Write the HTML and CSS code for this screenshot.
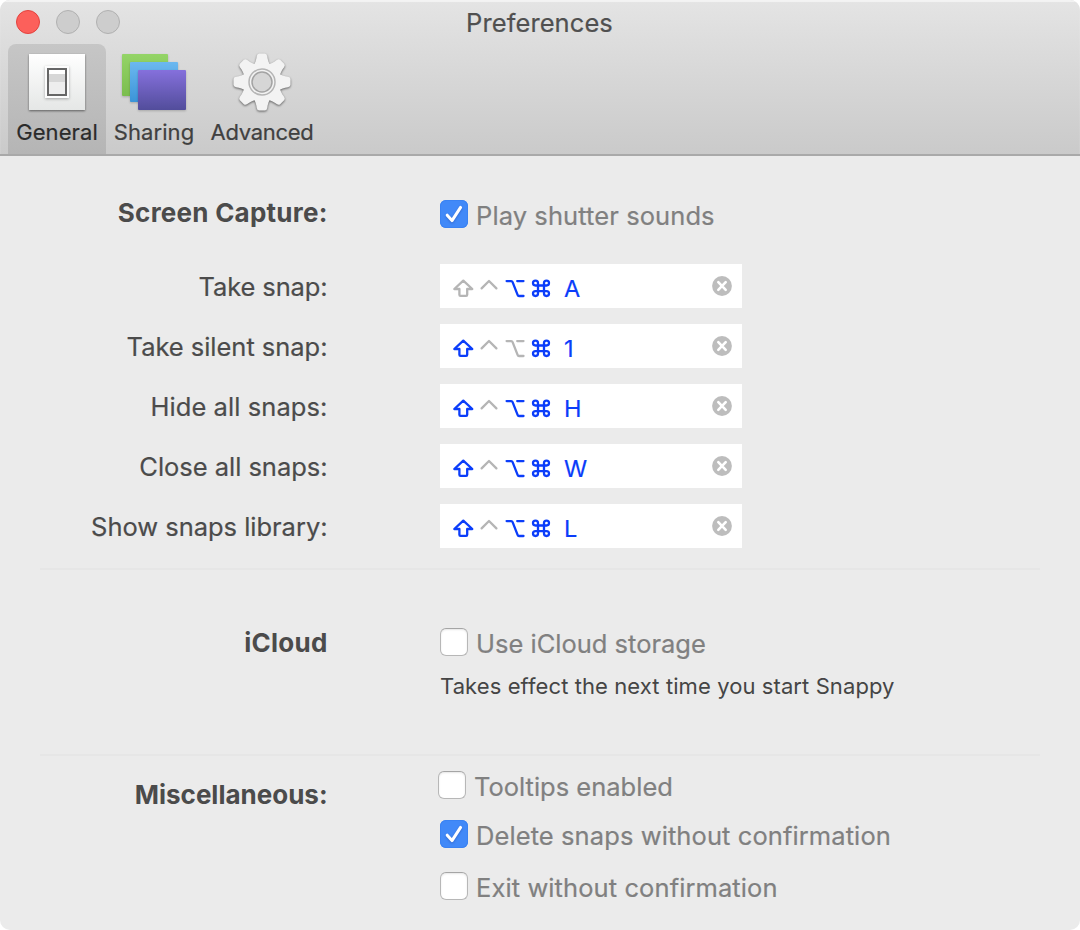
FILE: index.html
```html
<!DOCTYPE html>
<html lang="en">
<head>
<meta charset="utf-8">
<title>Preferences</title>
<link rel="stylesheet" href="styles.css">
</head>
<body>
<svg class="defs" aria-hidden="true">
  <symbol id="shift" viewBox="0 0 26 24"><path d="M13.3 4.6 4.3 13h5.100v5.800q0 1.100 1.100 1.100h5.600q1.100 0 1.100-1.100V13h5.100Z"/></symbol>
  <symbol id="ctrl" viewBox="0 0 26 24"><path d="M5.600 12.400 13 5l7.400 7.400"/></symbol>
  <symbol id="opt" viewBox="0 0 26 24"><path d="M4.600 5.100H9.200q1 0 1.400 1l5 12.800q.4 1.100 1.400 1.100H21.500M15.200 5.100H21.500"/></symbol>
  <symbol id="cmd" viewBox="0 0 26 24"><path d="M10 17.600V7.100a2.500 2.400 0 1 0-2.500 2.400H18.500a2.500 2.400 0 1 0-2.500-2.400V17.600a2.500 2.400 0 1 0 2.500-2.400H7.500a2.500 2.400 0 1 0 2.500 2.400Z"/></symbol>
  <symbol id="clear" viewBox="0 0 20 20"><circle cx="10" cy="10" r="9.900"/><path d="m6.300 6.200 7.400 7.600M13.700 6.200 6.300 13.800"/></symbol>
  <symbol id="tick" viewBox="0 0 28 28"><path d="M7.200 15.200 12 20.600 20.600 7.400"/></symbol>
</svg>
<div class="window">
  <header class="toolbar">
    <div class="titlebar">
      <div class="lights"><span class="light close"></span><span class="light"></span><span class="light"></span></div>
      <h1 class="title">Preferences</h1>
    </div>
    <nav class="tabs">
      <a class="tab general active">
        <svg class="tab-icon" viewBox="0 0 64 64">
          <defs><linearGradient id="plate" x2="0" y2="1"><stop stop-color="#fff"/><stop offset="1" stop-color="#e5e7e6"/></linearGradient></defs>
          <rect class="plate" x="4" y="4" width="56" height="56" fill="url(#plate)"/>
          <rect class="bezel" x="20" y="16" width="24" height="32"/>
          <rect x="23" y="19" width="18" height="26" fill="#eee" stroke="#666" stroke-width="2"/>
          <rect x="24" y="20" width="16" height="4" fill="#fff"/>
          <rect x="24" y="24" width="16" height="8" fill="#d7d7d7"/>
        </svg>
        <span>General</span>
      </a>
      <a class="tab sharing">
        <svg class="tab-icon" viewBox="0 0 64 64">
          <defs>
            <linearGradient id="green" x2="0" y2="1"><stop stop-color="#94d467"/><stop offset="1" stop-color="#7bbd4e"/></linearGradient>
            <linearGradient id="blue" x2="0" y2="1"><stop stop-color="#6cb8f0"/><stop offset="1" stop-color="#3b94d8"/></linearGradient>
            <linearGradient id="purple" x2="0" y2="1"><stop stop-color="#8570dc"/><stop offset="1" stop-color="#524d9b"/></linearGradient>
          </defs>
          <rect class="card" x="0" y="4" width="46" height="42" rx="1" fill="url(#green)"/>
          <rect class="card" x="8" y="12" width="48" height="40" rx="1" fill="url(#blue)"/>
          <rect class="card" x="16" y="20" width="48" height="40" rx="1" fill="url(#purple)"/>
        </svg>
        <span>Sharing</span>
      </a>
      <a class="tab advanced">
        <svg class="tab-icon" viewBox="0 0 64 64">
          <defs>
            <path id="tooth" d="M-9-16C-6.500-19-5.800-22-5.200-26Q-4.800-28.500-2.800-28.500H2.800Q4.800-28.500 5.200-26C5.800-22 6.500-19 9-16Z"/>
          </defs>
          <g class="gear" transform="translate(32 32)">
            <circle r="19"/>
            <use href="#tooth"/><use href="#tooth" transform="rotate(45)"/><use href="#tooth" transform="rotate(90)"/><use href="#tooth" transform="rotate(135)"/>
            <use href="#tooth" transform="rotate(180)"/><use href="#tooth" transform="rotate(225)"/><use href="#tooth" transform="rotate(270)"/><use href="#tooth" transform="rotate(315)"/>
          </g>
          <circle cx="32" cy="32" r="13" fill="none" stroke="#b5b5b5" stroke-width="1.500"/>
          <circle cx="32" cy="32" r="10" fill="#d6d6d6" stroke="#a3a3a3" stroke-width="1.500"/>
        </svg>
        <span>Advanced</span>
      </a>
    </nav>
  </header>

  <main>
    <section class="capture">
      <div class="row sound-row">
        <h2 class="heading wide">Screen Capture:</h2>
        <label class="check"><span class="box on"><svg><use href="#tick"/></svg></span><span class="text">Play shutter sounds</span></label>
      </div>
      <div class="row">
        <span class="name snug">Take snap:</span>
        <div class="keys"><svg class="mod"><use href="#shift"/></svg><svg class="mod"><use href="#ctrl"/></svg><svg class="mod set"><use href="#opt"/></svg><svg class="mod set"><use href="#cmd"/></svg><span class="key">A</span><svg class="clear"><use href="#clear"/></svg></div>
      </div>
      <div class="row">
        <span class="name">Take silent snap:</span>
        <div class="keys"><svg class="mod set"><use href="#shift"/></svg><svg class="mod"><use href="#ctrl"/></svg><svg class="mod"><use href="#opt"/></svg><svg class="mod set"><use href="#cmd"/></svg><span class="key">1</span><svg class="clear"><use href="#clear"/></svg></div>
      </div>
      <div class="row">
        <span class="name loose">Hide all snaps:</span>
        <div class="keys"><svg class="mod set"><use href="#shift"/></svg><svg class="mod"><use href="#ctrl"/></svg><svg class="mod set"><use href="#opt"/></svg><svg class="mod set"><use href="#cmd"/></svg><span class="key">H</span><svg class="clear"><use href="#clear"/></svg></div>
      </div>
      <div class="row">
        <span class="name">Close all snaps:</span>
        <div class="keys"><svg class="mod set"><use href="#shift"/></svg><svg class="mod"><use href="#ctrl"/></svg><svg class="mod set"><use href="#opt"/></svg><svg class="mod set"><use href="#cmd"/></svg><span class="key">W</span><svg class="clear"><use href="#clear"/></svg></div>
      </div>
      <div class="row">
        <span class="name">Show snaps library:</span>
        <div class="keys"><svg class="mod set"><use href="#shift"/></svg><svg class="mod"><use href="#ctrl"/></svg><svg class="mod set"><use href="#opt"/></svg><svg class="mod set"><use href="#cmd"/></svg><span class="key">L</span><svg class="clear"><use href="#clear"/></svg></div>
      </div>
    </section>

    <section class="icloud">
      <div class="row">
        <h2 class="heading wide">iCloud</h2>
        <div>
          <label class="check"><span class="box"></span><span class="text snug">Use iCloud storage</span></label>
          <p class="note">Takes effect the next time you start Snappy</p>
        </div>
      </div>
    </section>

    <section class="misc">
      <div class="row">
        <h2 class="heading">Miscellaneous:</h2>
        <div class="options">
          <label class="check outdent"><span class="box"></span><span class="text snug">Tooltips enabled</span></label>
          <label class="check"><span class="box on"><svg><use href="#tick"/></svg></span><span class="text">Delete snaps without confirmation</span></label>
          <label class="check"><span class="box"></span><span class="text">Exit without confirmation</span></label>
        </div>
      </div>
    </section>
  </main>
</div>
</body>
</html>
```
FILE: styles.css
```css
* { box-sizing: border-box; }
body { margin: 0; background: #fff; font-family: Inter, "Liberation Sans", sans-serif; color: #4b4b4b; }
svg { display: block; }
.defs { display: none; }
.window { height: 930px; border-radius: 10px; overflow: hidden; background: #ebebeb; }

.toolbar {
  height: 156px;
  background: linear-gradient(#e4e4e4, #cacaca);
  border-bottom: 2px solid #a9a9a9;
  box-shadow: inset 0 2px 1px #f3f3f3;
}
.titlebar { display: grid; grid-template-columns: 1fr auto 1fr; height: 44px; padding: 7px 0 0 16px; }
.lights { display: flex; gap: 16px; padding-top: 3px; }
.light { width: 24px; height: 24px; border-radius: 50%; background: #cdcdcd; border: 1px solid #b0b0b0; }
.light.close { background: #fc605b; border-color: #e3423e; }
.title { margin: 0 16px 0 -1px; font-size: 25.5px; line-height: 32px; font-weight: 400; letter-spacing: .08px; color: #505050; -webkit-text-stroke: .2px; }

.tabs { display: flex; padding-left: 8px; }
.tab { display: flex; flex-direction: column; align-items: center; height: 110px; padding-top: 6px; font-size: 22px; line-height: 28px; letter-spacing: .1px; color: #404040; -webkit-text-stroke: .2px; }
.tab-icon { width: 64px; height: 64px; margin-bottom: 4px; overflow: visible; }
.general { width: 98px; }
.sharing { width: 96px; }
.advanced { width: 120px; letter-spacing: -.3px; }
.active { background: linear-gradient(#c6c6c6, #b5b5b5); border-radius: 8px 8px 0 0; color: #2b2b2b; }
.plate { filter: drop-shadow(0 1px 1px rgba(0,0,0,.5)); }
.bezel { fill: #fcfcfc; filter: drop-shadow(0 1px 1.5px rgba(0,0,0,.3)); }
.card { filter: drop-shadow(0 1px 1px rgba(0,0,0,.2)); }
.gear { fill: #f3f3f3; filter: drop-shadow(0 1px 1px rgba(0,0,0,.55)); }

main { padding: 0 40px; }
.row { display: grid; grid-template-columns: 288px 1fr; column-gap: 112px; align-items: start; }
.heading, .name { margin: 0; line-height: 32px; text-align: right; }
.heading { font-size: 26px; font-weight: 700; letter-spacing: 0; padding-right: .4px; }
.heading.wide { letter-spacing: .24px; }
.name { padding-top: 7px; font-size: 25.5px; letter-spacing: -.03px; padding-right: .5px; -webkit-text-stroke: .2px; }
.name.snug { letter-spacing: -.12px; }
.name.loose { letter-spacing: .08px; }

.capture { display: flex; flex-direction: column; gap: 16px; height: 412px; padding-top: 41px; }
.sound-row { height: 51px; }
.sound-row .check { height: 35px; padding-top: 3px; }

.check { display: flex; gap: 8px; height: 32px; font-size: 25.5px; line-height: 32px; letter-spacing: .09px; color: #808080; }
.text { white-space: nowrap; -webkit-text-stroke: .2px; }
.text.snug { letter-spacing: 0; }
.outdent { margin-left: -2px; }
.box { flex: none; width: 28px; height: 28px; border: 1px solid #b7b7b7; border-top-color: #a5a5a5; border-radius: 6px; background: #fff; box-shadow: inset 0 1px 2px rgba(0,0,0,.1); }
.box.on { border: 0; background: #4189f8; box-shadow: inset 0 0 0 1px #3a82f2; }
.box svg { width: 28px; height: 28px; fill: none; stroke: #fff; stroke-width: 3; stroke-linecap: round; stroke-linejoin: round; filter: drop-shadow(0 1px 1px rgba(0,0,80,.25)); }

.keys { display: flex; width: 302px; height: 44px; padding: 12px 10px 0; background: #fff; }
.mod { width: 26px; height: 24px; fill: none; stroke: #b5b5b5; stroke-width: 2.3; stroke-linecap: round; stroke-linejoin: round; }
.mod.set { stroke: #0b3dfa; }
.key { margin-left: 10px; font-size: 23.5px; line-height: 25px; color: #0b3dfa; -webkit-text-stroke: .2px; }
.clear { width: 20px; height: 20px; margin-left: auto; fill: #bdbdbd; stroke-linecap: round; }
#clear path { stroke: #fff; stroke-width: 2.6; }

.icloud { height: 186px; padding-top: 58px; border-top: 2px solid #e6e6e6; }
.icloud .heading { margin-top: -1px; }
.note { margin: 12px 0 0; font-size: 22px; line-height: 28px; letter-spacing: .09px; color: #454545; }

.misc { padding-top: 15px; border-top: 2px solid #e6e6e6; }
.misc .heading { padding-top: 8px; }
.options .check { margin-bottom: 20px; }
.options .outdent { margin-bottom: 17px; }
```
